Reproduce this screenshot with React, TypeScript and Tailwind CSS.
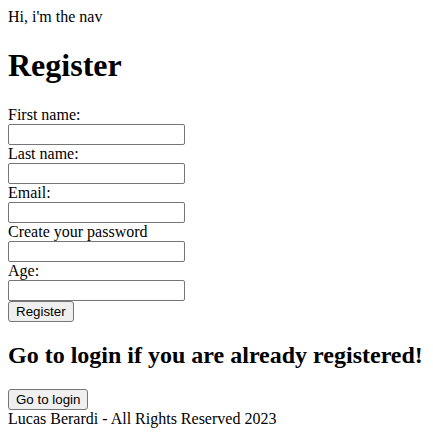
export default function App() {
  const inputClass =
    "block box-border h-[21px] w-[177px] rounded-[2px] border border-[#767676] bg-white px-[2px] font-['Liberation_Sans',Arial,sans-serif] text-[13.33px] leading-[normal] text-black outline-none";
  const buttonClass =
    "block box-border h-[21px] w-fit rounded-[3px] border border-[#767676] bg-[#efefef] px-[7px] font-['Liberation_Sans',Arial,sans-serif] text-[13.33px] leading-[normal] text-black";

  return (
    <div className="m-2 font-['Liberation_Serif','Times_New_Roman',serif] text-base leading-[normal] text-black">
      <div>Hi, i'm the nav</div>
      <h1 className="my-[21.44px] text-[32px] font-bold leading-[normal]">
        Register
      </h1>
      <form
        className="flex flex-col items-start"
        onSubmit={(e) => e.preventDefault()}
      >
        <label htmlFor="firstName">First name:</label>
        <input type="text" id="firstName" className={inputClass} />
        <label htmlFor="lastName">Last name:</label>
        <input type="text" id="lastName" className={inputClass} />
        <label htmlFor="email">Email:</label>
        <input type="email" id="email" className={inputClass} />
        <label htmlFor="password">Create your password</label>
        <input type="password" id="password" className={inputClass} />
        <label htmlFor="age">Age:</label>
        <input type="number" id="age" className={inputClass} />
        <button type="submit" className={buttonClass}>
          Register
        </button>
      </form>
      <h2 className="my-[19.92px] text-[24px] font-bold leading-[normal]">
        Go to login if you are already registered!
      </h2>
      <button className={buttonClass}>Go to login</button>
      <footer>Lucas Berardi - All Rights Reserved 2023</footer>
    </div>
  );
}
